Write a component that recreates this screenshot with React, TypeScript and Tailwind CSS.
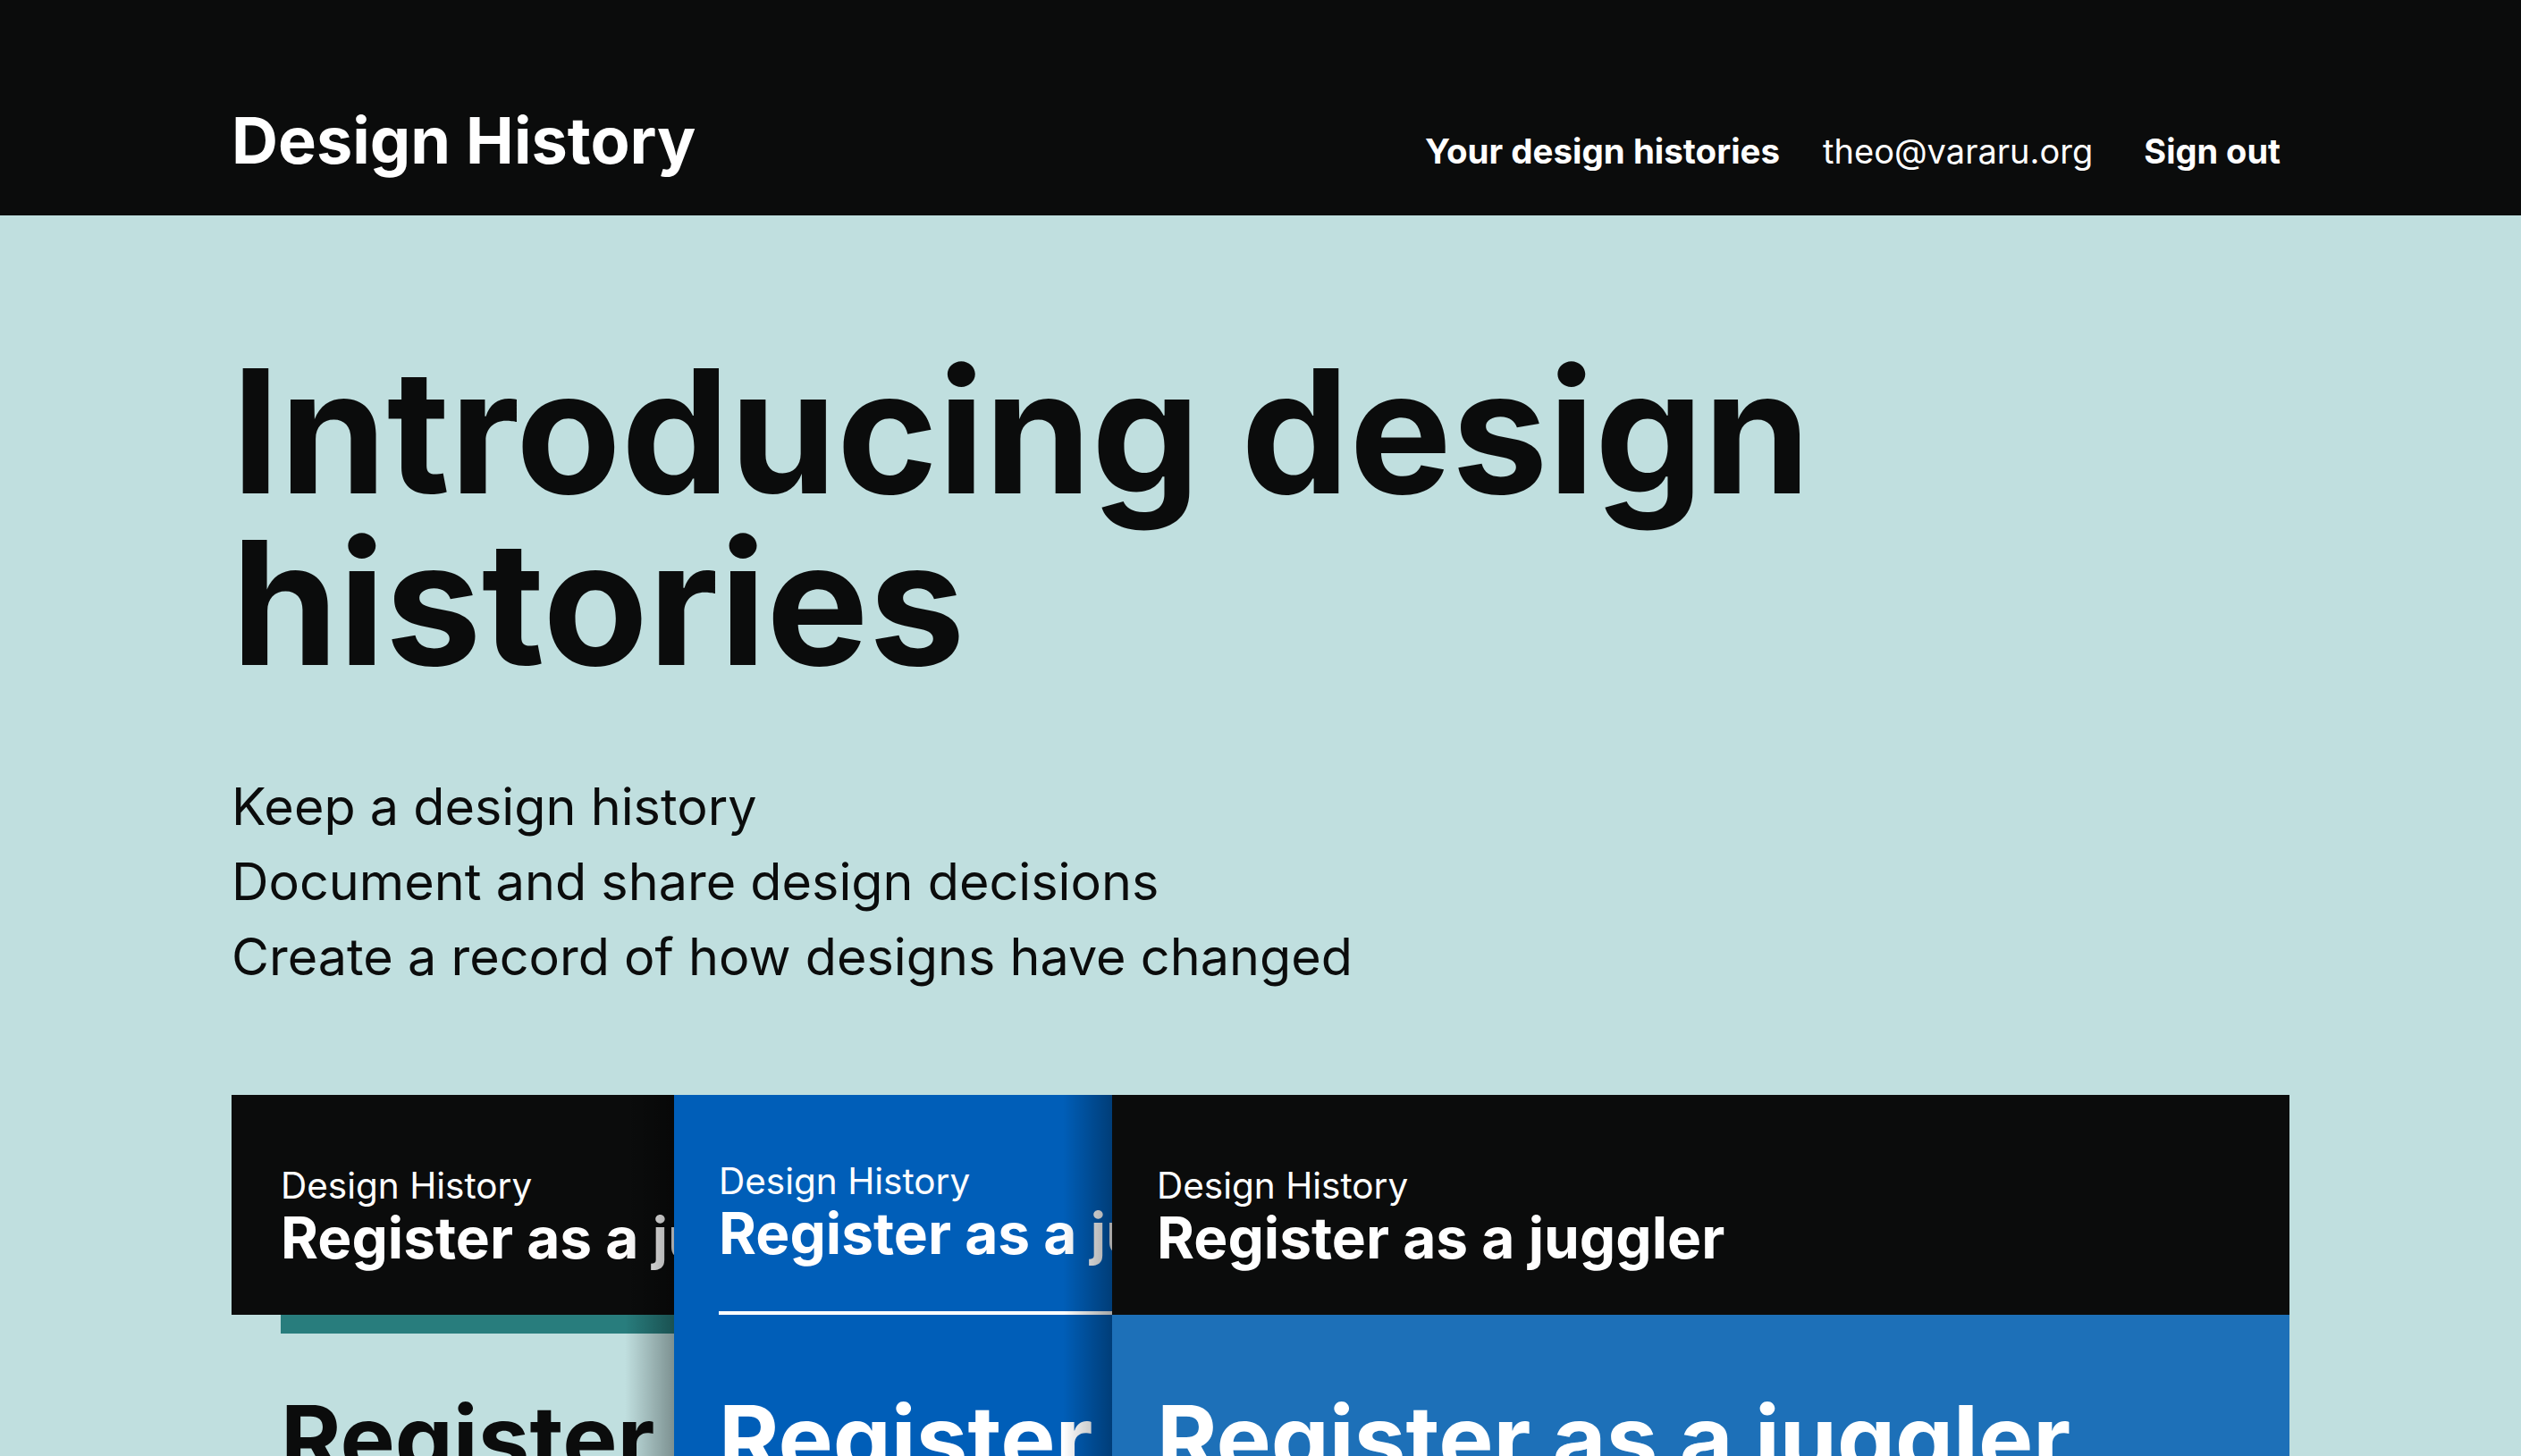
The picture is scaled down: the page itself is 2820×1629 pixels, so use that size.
import React from "react";

const cardText = "Register as a juggler";

function Shade() {
  return (
    <div className="pointer-events-none absolute inset-y-0 right-0 w-[55px] bg-gradient-to-r from-transparent to-black/35" />
  );
}

function CardHeader({ title }: { title: string }) {
  return (
    <>
      <p className="whitespace-nowrap text-[40.5px] font-normal leading-[50px] text-white">
        Design History
      </p>
      <p className="whitespace-nowrap text-[64px] font-bold leading-[66px] text-white">
        {title}
      </p>
    </>
  );
}

export default function App() {
  return (
    <div className="h-[1629px] overflow-hidden bg-[#c0dfdf] text-[#0b0c0c] [font-family:Inter,sans-serif]">
      <header className="h-[241px] bg-[#0b0c0c]">
        <div className="mx-auto flex w-[2302px] items-baseline justify-between pt-[121px]">
          <span className="text-[72px] font-bold leading-none text-white">
            Design History
          </span>
          <nav className="flex items-baseline text-[38px] leading-none text-white">
            <a className="text-[38.5px] font-bold">Your design histories</a>
            <span className="ml-[48px] font-normal">theo@vararu.org</span>
            <a className="ml-[57px] mr-[10px] font-bold">Sign out</a>
          </nav>
        </div>
      </header>

      <main className="mx-auto w-[2302px]">
        <h1 className="pt-[145px] text-[192px] font-bold leading-none tracking-[0.2px]">
          Introducing design
          <br />
          histories
        </h1>

        <div className="mt-[90px] text-[57.5px] leading-[84px]">
          <p>Keep a design history</p>
          <p>Document and share design decisions</p>
          <p>Create a record of how designs have changed</p>
        </div>

        <div className="mt-[113px] flex">
          {/* first screenshot: black header, teal bar, pale body */}
          <div className="relative z-0 w-[495px] shrink-0 overflow-hidden">
            <div className="h-[246px] bg-[#0b0c0c] pl-[55px] pt-[77px]">
              <CardHeader title={cardText} />
            </div>
            <div className="ml-[55px] h-[21px] bg-[#287d7d]" />
            <div className="h-[500px] pl-[55px] pt-[66px]">
              <p className="whitespace-nowrap text-[103px] font-bold leading-none text-[#0b0c0c]">
                {cardText}
              </p>
            </div>
            <Shade />
          </div>

          {/* second screenshot: all blue */}
          <div className="relative z-10 w-[490px] shrink-0 overflow-hidden bg-[#005eb8]">
            <div className="ml-[50px] h-[246px] border-b-[4px] border-white pt-[72px]">
              <CardHeader title={cardText} />
            </div>
            <div className="h-[500px] pl-[50px] pt-[87px]">
              <p className="whitespace-nowrap text-[103px] font-bold leading-none text-white">
                {cardText}
              </p>
            </div>
            <Shade />
          </div>

          {/* third screenshot: black header, govuk blue body */}
          <div className="relative z-20 min-w-0 flex-1 overflow-hidden">
            <div className="h-[246px] bg-[#0b0c0c] pl-[50px] pt-[77px]">
              <CardHeader title={cardText} />
            </div>
            <div className="h-[500px] bg-[#1d70b8] pl-[50px] pt-[87px]">
              <p className="whitespace-nowrap text-[103px] font-bold leading-none text-white">
                {cardText}
              </p>
            </div>
          </div>
        </div>
      </main>
    </div>
  );
}
